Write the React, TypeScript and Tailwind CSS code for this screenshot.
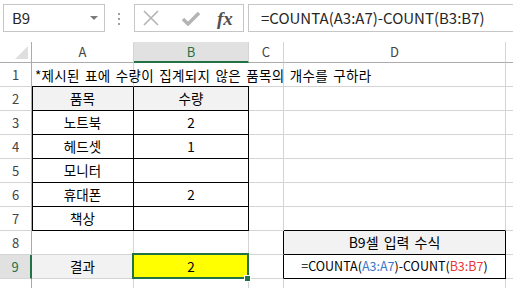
import React from 'react'

const font = { fontFamily: '"Noto Sans CJK KR", "Noto Sans", sans-serif' }

type Row = {
  n: number
  a?: React.ReactNode
  b?: React.ReactNode
}

const rows: Row[] = [
  { n: 1 },
  { n: 2, a: '품목', b: '수량' },
  { n: 3, a: '노트북', b: '2' },
  { n: 4, a: '헤드셋', b: '1' },
  { n: 5, a: '모니터' },
  { n: 6, a: '휴대폰', b: '2' },
  { n: 7, a: '책상' },
  { n: 8 },
  { n: 9, a: '결과', b: '2' },
]

function Toolbar() {
  return (
    <div className="flex h-[42px] items-start bg-white pt-[4px]">
      <div className="ml-[3px] flex h-[28px] w-[102px] items-center justify-between border border-[#c6c6c6] pl-[8px] pr-[6px]">
        <span className="text-[15px] text-[#262626]">B9</span>
        <svg width="8" height="5" viewBox="0 0 8 5">
          <polygon points="0,0 8,0 4,4" fill="#7a7a7a" />
        </svg>
      </div>
      <div className="ml-[13px] mt-[9px] flex flex-col gap-[3px]">
        <div className="h-[2px] w-[2px] bg-[#a0a0a0]" />
        <div className="h-[2px] w-[2px] bg-[#a0a0a0]" />
        <div className="h-[2px] w-[2px] bg-[#a0a0a0]" />
      </div>
      <div className="ml-[14px] flex h-[28px] w-[110px] items-center border border-[#c6c6c6] pl-[8px]">
        <svg width="16" height="16" viewBox="0 0 16 16">
          <path d="M1 1 L15 15 M15 1 L1 15" stroke="#b4b4b4" strokeWidth="1.6" />
        </svg>
        <svg className="ml-[23px]" width="18" height="15" viewBox="0 0 18 15">
          <path d="M1 8 L6 13 L17 2" stroke="#b4b4b4" strokeWidth="3.4" fill="none" />
        </svg>
        <span
          className="ml-[17px] text-[19px] italic font-bold text-[#505050] leading-none"
          style={{ fontFamily: '"Liberation Serif", serif' }}
        >
          fx
        </span>
      </div>
      <div className="ml-[4px] flex h-[28px] flex-1 items-center border border-r-0 border-[#c6c6c6] pl-[12px]">
        <span className="text-[15px] text-[#262626]">=COUNTA(A3:A7)-COUNT(B3:B7)</span>
      </div>
    </div>
  )
}

function ColumnHeader() {
  return (
    <div className="flex h-[21px] text-[13px] text-[#444]">
      <div className="relative w-[32px] border-r border-b border-[#ababab] bg-white">
        <svg className="absolute bottom-[3px] right-[3px]" width="13" height="13" viewBox="0 0 13 13">
          <polygon points="13,0 13,13 0,13" fill="#dfdfdf" />
        </svg>
      </div>
      <div className="flex w-[102px] items-center justify-center border-r border-b border-[#ababab] border-r-[#d4d4d4] bg-white">A</div>
      <div className="flex w-[115px] items-center justify-center border-b-2 border-r border-b-[#217346] border-r-[#d4d4d4] bg-[#e1e1e1] text-[#217346]">B</div>
      <div className="flex w-[35px] items-center justify-center border-r border-b border-[#ababab] border-r-[#d4d4d4] bg-white">C</div>
      <div className="flex w-[222px] items-center justify-center border-r border-b border-[#ababab] border-r-[#d4d4d4] bg-white">D</div>
      <div className="flex-1 border-b border-[#ababab] bg-white" />
    </div>
  )
}

function SheetRow({ row }: { row: Row }) {
  const n = row.n
  const inTable = n >= 2 && n <= 7
  const selected = n === 9
  const grid = 'border-[#d4d4d4]'

  const hdr = selected
    ? 'bg-[#e1e1e1] text-[#217346] border-r-2 border-r-[#217346] border-b border-b-[#d4d4d4]'
    : 'bg-white text-[#444] border-r border-b border-r-[#ababab] border-b-[#d4d4d4]'

  let aCls = `border-r border-b ${grid}`
  let bCls = `border-r border-b ${grid}`
  let cCls = `border-r border-b ${grid}`
  let dCls = `border-r border-b ${grid}`

  if (n === 1) {
    aCls = 'border-r border-b border-r-[#d4d4d4] border-b-black'
    bCls = 'border-b border-b-black'
  }
  if (inTable) {
    aCls = 'border-r border-b border-black shadow-[inset_1px_0_0_#000]'
    bCls = 'border-r border-b border-black'
  }
  if (n === 2) {
    aCls += ' bg-[#f2f2f2]'
    bCls += ' bg-[#f2f2f2]'
  }
  if (n === 7) {
    dCls = 'border-r border-b border-r-[#d4d4d4] border-b-black'
  }
  if (n === 8 || n === 9) {
    cCls = 'border-r border-b border-r-black border-b-[#d4d4d4]'
    dCls = 'border-r border-b border-black'
  }
  if (n === 8) dCls += ' bg-[#f2f2f2]'
  if (n === 9) {
    aCls = 'border-r border-b border-[#d4d4d4] bg-[#f2f2f2]'
    bCls = 'relative border-r border-b border-[#d4d4d4] bg-[#ffff00]'
  }

  return (
    <div className="flex h-[24px] text-[13.5px] text-black">
      <div className={`flex w-[32px] items-center justify-center pt-[1px] text-[13px] ${hdr}`}>{n}</div>
      <div className={`relative flex w-[102px] items-center justify-center ${aCls}`}>
        {n === 1 ? (
          <span className="absolute left-[3px] top-[2px] whitespace-nowrap tracking-[0.3px] [word-spacing:2px]">
            *제시된 표에 수량이 집계되지 않은 품목의 개수를 구하라
          </span>
        ) : (
          row.a
        )}
      </div>
      <div className={`flex w-[115px] items-center justify-center ${bCls}`}>
        {row.b}
        {selected && (
          <>
            <div className="pointer-events-none absolute -left-[2px] -top-[2px] h-[26px] w-[117px] border-2 border-[#217346]" />
            <div className="absolute -bottom-[4px] -right-[3px] h-[7px] w-[7px] border border-white bg-[#217346]" />
          </>
        )}
      </div>
      <div className={`w-[35px] ${cCls}`} />
      <div className={`flex w-[222px] items-center justify-center ${dCls}`}>
        {n === 8 && <span className="text-[14px] [word-spacing:2px]">B9셀 입력 수식</span>}
        {n === 9 && (
          <span className="text-[12.5px]">
            =COUNTA(<span className="text-[#3c78c8]">A3:A7</span>)-COUNT(<span className="text-[#e8383a]">B3:B7</span>)
          </span>
        )}
      </div>
      <div className={`flex-1 border-b ${grid}`} />
    </div>
  )
}

export default function App() {
  return (
    <div className="h-[288px] w-[513px] overflow-hidden bg-white" style={font}>
      <Toolbar />
      <ColumnHeader />
      {rows.map((r) => (
        <SheetRow key={r.n} row={r} />
      ))}
      <div className="flex h-[24px]">
        <div className="w-[32px] border-r border-[#ababab]" />
        <div className="w-[102px] border-r border-[#d4d4d4]" />
        <div className="w-[115px] border-r border-[#d4d4d4]" />
        <div className="w-[35px] border-r border-[#d4d4d4]" />
        <div className="w-[222px] border-r border-[#d4d4d4]" />
      </div>
    </div>
  )
}
